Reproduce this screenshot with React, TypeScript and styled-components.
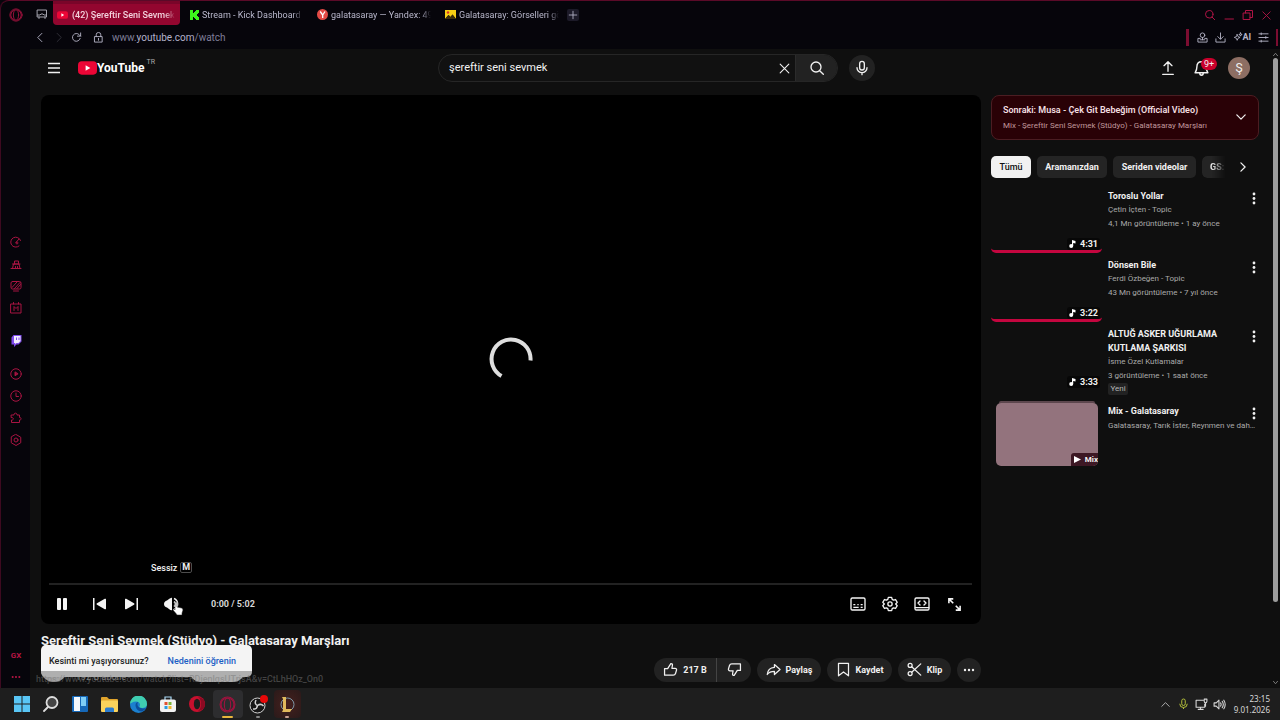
import React from "react";
import styled, { createGlobalStyle, css, keyframes } from "styled-components";

const GlobalStyle = createGlobalStyle`
  * { box-sizing: border-box; }
  html, body { margin: 0; background: #07060c; }
  body { font-family: Roboto, "Liberation Sans", sans-serif; color: #f1f1f1; }
  button, input { font: inherit; color: inherit; }
  button { border: 0; padding: 0; background: none; cursor: pointer; }
  a { color: inherit; text-decoration: none; }
  ul { list-style: none; margin: 0; padding: 0; }
  h1, h2, h3, p { margin: 0; }
  svg { display: block; flex: none; }
`;

/* ---------- icons ---------- */

type IconProps = {
  size?: number;
  width?: number;
  box?: string;
  stroke?: number;
  filled?: boolean;
  children: React.ReactNode;
};

const Icon = ({ size = 16, width, box = "0 0 24 24", stroke = 2, filled, children }: IconProps) => (
  <svg
    width={width ?? size}
    height={size}
    viewBox={box}
    fill={filled ? "currentColor" : "none"}
    stroke={filled ? "none" : "currentColor"}
    strokeWidth={stroke}
    strokeLinecap="round"
    strokeLinejoin="round"
    aria-hidden="true"
  >
    {children}
  </svg>
);

const CloseGlyph = <path d="M4 4l16 16M20 4L4 20" />;
const SearchGlyph = (
  <>
    <circle cx="10.500" cy="10.500" r="7.500" />
    <path d="M16 16l5.500 5.500" />
  </>
);
const MicGlyph = (
  <>
    <rect x="8.500" y="2" width="7" height="13" rx="3.500" />
    <path d="M4.500 11.500a7.500 7.500 0 0 0 15 0M12 19v3" />
  </>
);

/* ---------- window ---------- */

const Desktop = styled.div`
  display: flex;
  flex-direction: column;
  height: 100vh;
  overflow: hidden;
`;

const BrowserWindow = styled.div`
  display: flex;
  flex-direction: column;
  flex: 1;
  min-height: 0;
  border-left: 1px solid #3d0a20;
  border-top-left-radius: 8px;
  background: #06050b;
`;

const TabStrip = styled.div`
  display: flex;
  height: 25px;
  border-top: 1px solid #5a0a28;
  border-top-left-radius: 8px;
  color: #b9b8cc;
  font-size: 9px;
`;

const BrowserMark = styled.button`
  display: grid;
  place-items: center;
  width: 30px;
  height: 28px;
  color: #a3123f;
`;

const WorkspaceButton = styled.button`
  display: grid;
  place-items: center;
  width: 22px;
  height: 26px;
  color: #a3a3ad;
`;

const Tab = styled.a<{ $active?: boolean }>`
  display: flex;
  align-items: center;
  gap: 3px;
  width: 128px;
  height: 24px;
  padding: 3px 5px 0 9px;
  ${(p) =>
    p.$active &&
    css`
      width: 127px;
      gap: 4px;
      padding: 3px 5px 0 4px;
      color: #f3d3dd;
      font-weight: 500;
      background: linear-gradient(#7a0529 0 3px, #93062f 3px);
      border-radius: 0 0 4px 4px;
    `}
`;

const TabTitle = styled.span`
  flex: 1;
  overflow: hidden;
  white-space: nowrap;
  mask-image: linear-gradient(90deg, #000 90%, transparent);
`;

const NewTab = styled.button`
  display: grid;
  place-items: center;
  width: 12px;
  height: 12px;
  margin: 8px 0 0 3px;
  border-radius: 2px;
  background: #1c1a28;
`;

const WindowButtons = styled.div`
  display: flex;
  margin-left: auto;
  padding: 2px 4px 0 0;
  color: #b01445;
`;

const WindowButton = styled.button`
  display: grid;
  place-items: center;
  width: 19px;
  height: 24px;
`;

const AddressBar = styled.div`
  display: flex;
  align-items: center;
  height: 24px;
  padding: 0 2px 0 30px;
  color: #b5b4c6;
`;

const NavButton = styled.button<{ $dim?: boolean }>`
  display: grid;
  place-items: center;
  width: 18px;
  height: 20px;
  opacity: ${(p) => (p.$dim ? 0.25 : 1)};
`;

const LockButton = styled(NavButton)`
  margin-left: 4px;
`;

const Url = styled.p`
  margin-left: 5px;
  color: #7f7e98;
  font-size: 10px;
  strong {
    color: #b2b1ca;
    font-weight: 400;
  }
`;

const Extensions = styled.div`
  display: flex;
  align-items: center;
  justify-content: space-between;
  width: 92px;
  height: 17px;
  margin-left: auto;
  padding: 0 7px 0 8px;
  border: solid #7c0d31;
  border-width: 0 2px 0 3px;
`;

const AiButton = styled.button`
  display: flex;
  align-items: center;
  font-size: 9px;
  font-weight: 700;
`;

const WindowBody = styled.div`
  display: flex;
  flex: 1;
  min-height: 0;
`;

const SideBar = styled.nav`
  display: flex;
  flex-direction: column;
  width: 29px;
  color: #a81442;
`;

const SideGroups = styled.div`
  display: flex;
  flex-direction: column;
  gap: 11px;
  margin: auto 0;
  padding-bottom: 11px;
`;

const SideButton = styled.button<{ $accent?: boolean }>`
  display: grid;
  place-items: center;
  width: 30px;
  height: 22px;
  font-size: 8px;
  font-weight: 700;
  color: ${(p) => (p.$accent ? "#b9a1f5" : "inherit")};
`;

const SideFooter = styled.div`
  color: #b81545;
`;

/* ---------- page ---------- */

const Page = styled.div`
  position: relative;
  flex: 1;
  min-width: 0;
  overflow: hidden;
  background: #0f0f0f;
`;

const Masthead = styled.header`
  display: grid;
  grid-template-columns: 1fr minmax(200px, 437px) 1fr;
  align-items: center;
  height: 38px;
  padding: 0 7px 0 18px;
`;

const Brand = styled.div`
  display: flex;
  align-items: center;
`;

const Logo = styled.a`
  display: flex;
  align-items: center;
  margin-left: 18px;
  font-size: 12px;
  font-weight: 700;
  color: #fff;
`;

const Region = styled.sup`
  align-self: flex-start;
  margin: -3px 0 0 2px;
  color: #aaa;
  font-size: 7px;
  font-weight: 400;
  line-height: 8px;
`;

const SearchRow = styled.div`
  display: flex;
  align-items: center;
  gap: 11px;
`;

const SearchForm = styled.form`
  display: flex;
  flex: 1;
  height: 28px;
  overflow: hidden;
  border: 1px solid #262626;
  border-radius: 14px;
  background: #111;
`;

const SearchInput = styled.input`
  flex: 1;
  min-width: 0;
  padding: 0 10px 1px;
  border: 0;
  outline: 0;
  background: none;
  font-size: 11px;
`;

const ClearButton = styled.button`
  display: grid;
  place-items: center;
  width: 22px;
`;

const SubmitButton = styled.button`
  display: grid;
  place-items: center;
  width: 42px;
  border-left: 1px solid #2b2b2b;
  background: #222;
`;

const VoiceButton = styled.button`
  display: grid;
  place-items: center;
  width: 26px;
  height: 26px;
  border-radius: 50%;
  background: #222;
`;

const Account = styled.div`
  display: flex;
  align-items: center;
  justify-content: flex-end;
  gap: 17px;
  padding-right: 15px;
`;

const AccountButton = styled.button`
  position: relative;
  display: grid;
  place-items: center;
  width: 16px;
  height: 22px;
`;

const Count = styled.span`
  position: absolute;
  left: 8px;
  top: 1px;
  padding: 0 3px;
  border-radius: 6px;
  background: #c9002b;
  font-size: 9px;
  line-height: 12px;
`;

const Avatar = styled.button`
  width: 22px;
  height: 22px;
  margin-left: 2px;
  border-radius: 50%;
  background: #8d6e63;
  font-size: 12px;
  line-height: 22px;
`;

const Columns = styled.div`
  display: flex;
  gap: 10px;
  padding: 8px 13px 0 11px;
`;

const Primary = styled.main`
  flex: 1;
  min-width: 0;
`;

const Player = styled.section`
  position: relative;
  display: flex;
  flex-direction: column;
  justify-content: flex-end;
  aspect-ratio: 16 / 9;
  padding: 0 9px 0 8px;
  border-radius: 8px;
  background: #000;
`;

const spin = keyframes`
  from { transform: rotate(0); }
  to { transform: rotate(360deg); }
`;

const Spinner = styled.div`
  position: absolute;
  inset: 0;
  display: grid;
  place-items: center;
  color: #dedede;
  pointer-events: none;
  svg { animation: ${spin} 2s linear infinite paused; }
`;

const Tooltip = styled.div`
  position: absolute;
  left: 110px;
  bottom: 50px;
  display: flex;
  align-items: center;
  gap: 3px;
  font-size: 9px;
  font-weight: 500;
  line-height: 12px;
`;

const Key = styled.kbd`
  padding: 0 1px;
  border: 1px solid #4d4d4d;
  border-radius: 2px;
  font: 700 9px/9px Roboto, sans-serif;
`;

const Progress = styled.div`
  height: 2px;
  background: #222;
`;

const Controls = styled.div`
  display: flex;
  align-items: center;
  height: 39px;
  padding: 0 2px 0 0;
`;

const ControlGroup = styled.div<{ $before?: number }>`
  display: flex;
  margin-left: ${(p) => p.$before ?? 0}px;
`;

const RightControls = styled.div`
  display: flex;
  margin-left: auto;
`;

const ControlButton = styled.button`
  position: relative;
  display: grid;
  place-items: center;
  width: 32px;
  height: 28px;
  color: #f4f4f4;
`;

const FirstControl = styled(ControlButton)`
  width: 26px;
`;

const Pointer = styled.span`
  position: absolute;
  left: 16px;
  top: 11px;
`;

const Clock = styled.p`
  margin-left: 23px;
  font-size: 9px;
  font-weight: 700;
  color: #d5d5d5;
`;

const Title = styled.h1`
  margin-top: 7px;
  font-size: 13px;
  font-weight: 700;
  line-height: 20px;
  white-space: nowrap;
`;

const MetaRow = styled.div`
  display: flex;
  align-items: center;
  margin-top: 7px;
`;

const ChannelAvatar = styled.a`
  width: 26px;
  height: 24px;
  border-radius: 50%;
  background: #e2e2e2;
`;

const Subscribers = styled.p`
  align-self: flex-end;
  width: 113px;
  margin-left: 9px;
  color: #aaa;
  font-size: 9px;
  line-height: 10px;
`;

const Subscribe = styled.button`
  width: 56px;
  height: 24px;
  border-radius: 12px;
  background: #f1f1f1;
`;

const Actions = styled.div`
  display: flex;
  gap: 6px;
  margin-left: auto;
  font-size: 9px;
  font-weight: 700;
`;

const Pill = styled.button<{ $width: number }>`
  display: flex;
  align-items: center;
  justify-content: center;
  gap: 5px;
  width: ${(p) => p.$width}px;
  height: 24px;
  border-radius: 12px;
  background: #222;
`;

const SplitPill = styled.div`
  display: flex;
  overflow: hidden;
  border-radius: 12px;
`;

const LikeButton = styled(Pill)`
  border-radius: 0;
`;

const DislikeButton = styled(Pill)`
  border-radius: 0;
  border-left: 1px solid #444;
`;

const Toast = styled.div`
  position: absolute;
  left: 11px;
  bottom: 11px;
  display: flex;
  align-items: center;
  gap: 19px;
  height: 32px;
  padding: 0 16px 1px 8px;
  border-radius: 5px;
  background: #f4f4f4;
  color: #222;
  font-size: 9px;
  font-weight: 500;
  white-space: nowrap;
`;

const ToastLink = styled.a`
  color: #1c5fc4;
`;

const StatusUrl = styled.div`
  position: absolute;
  left: 0;
  bottom: 0;
  height: 17px;
  padding: 0 5px 0 6px;
  background: rgba(15, 15, 15, 0.3);
  color: rgba(120, 120, 120, 0.5);
  font-size: 9px;
  font-weight: 500;
  line-height: 16px;
  white-space: nowrap;
`;

/* ---------- related column ---------- */

const Secondary = styled.aside`
  width: 268px;
`;

const QueueCard = styled.button`
  display: flex;
  align-items: center;
  justify-content: space-between;
  width: 100%;
  height: 45px;
  padding: 0 12px 1px 11px;
  border: 1px solid #4b1d22;
  border-radius: 8px;
  background: #290106;
  text-align: left;
`;

const QueueTitle = styled.p`
  color: #f3dfe0;
  font-size: 9px;
  font-weight: 600;
  line-height: 16px;
`;

const QueueSource = styled.p`
  color: #c0989c;
  font-size: 8px;
  line-height: 15px;
`;

const Chips = styled.div`
  display: flex;
  align-items: center;
  gap: 6px;
  margin: 16px 0 11px;
`;

const Chip = styled.button<{ $width: number; $selected?: boolean }>`
  width: ${(p) => p.$width}px;
  height: 22px;
  border-radius: 5px;
  background: ${(p) => (p.$selected ? "#f1f1f1" : "#242424")};
  color: ${(p) => (p.$selected ? "#0f0f0f" : "#f1f1f1")};
  font-size: 9px;
  font-weight: ${(p) => (p.$selected ? 500 : 700)};
  line-height: 22px;
  white-space: nowrap;
`;

const CutChip = styled(Chip)`
  padding-left: 8px;
  overflow: hidden;
  border-radius: 5px 0 0 5px;
  text-align: left;
  mask-image: linear-gradient(90deg, #000 40%, transparent);
`;

const ChipsNext = styled.button`
  margin-left: 6px;
`;

const VideoList = styled.ul`
  display: flex;
  flex-direction: column;
  gap: 5px;
`;

const VideoItem = styled.li`
  display: flex;
  gap: 6px;
`;

const Thumb = styled.a<{ $watched?: boolean }>`
  display: flex;
  align-items: flex-end;
  justify-content: flex-end;
  width: 111px;
  height: 64px;
  padding: 0 2px 0 0;
  border-bottom: 3px solid transparent;
  border-radius: 5px;
  ${(p) => p.$watched && css`border-bottom-color: #c4063f;`}
`;

const Duration = styled.span`
  display: flex;
  align-items: center;
  gap: 4px;
  padding: 0 2px;
  border-radius: 3px;
  background: #070707;
  font-size: 9px;
  font-weight: 700;
  line-height: 12px;
`;

const MixThumb = styled.a`
  display: flex;
  flex-direction: column;
  width: 102px;
  height: 65px;
  margin: -3px 4px 0 5px;
  &::before {
    content: "";
    height: 2px;
    margin: 0 3px;
    border-radius: 4px 4px 0 0;
    background: #5d474e;
  }
`;

const MixCover = styled.span`
  display: flex;
  flex: 1;
  align-items: flex-end;
  justify-content: flex-end;
  overflow: hidden;
  border-radius: 5px;
  background: #93737d;
`;

const MixBadge = styled.span`
  display: flex;
  align-items: center;
  gap: 4px;
  height: 13px;
  padding-left: 3px;
  border-radius: 3px 0 0 0;
  background: #3d1824;
  font-size: 8px;
  font-weight: 700;
`;

const VideoText = styled.div`
  flex: 1;
  min-width: 0;
  color: #aaa;
  font-size: 8px;
  line-height: 14px;
`;

const VideoTitle = styled.h3`
  color: #f1f1f1;
  font-size: 9px;
  font-weight: 700;
  line-height: 14px;
`;

const Ellipsed = styled.p`
  overflow: hidden;
  text-overflow: ellipsis;
  white-space: nowrap;
`;

const NewBadge = styled.span`
  display: block;
  width: 20px;
  margin-bottom: 4px;
  border-radius: 2px;
  background: #222;
  color: #b5b5b5;
  text-align: center;
  line-height: 12px;
`;

const MoreButton = styled.button`
  align-self: flex-start;
  width: 10px;
  height: 18px;
`;

const VideoTop = styled.div`
  display: flex;
  justify-content: space-between;
  height: 15px;
`;

const ScrollTrack = styled.div`
  display: flex;
  flex-direction: column;
  align-items: center;
  width: 8px;
  padding: 3px 2px 3px 0;
  color: #8c8c8c;
  background: #0f0f0f;
`;

const ScrollThumb = styled.div`
  width: 5px;
  height: 86%;
  margin: 1px 0 auto;
  border-radius: 3px;
  background: #9d9d9d;
`;

/* ---------- taskbar ---------- */

const Taskbar = styled.footer`
  display: flex;
  align-items: center;
  height: 32px;
  padding: 0 10px 0 7px;
  background: #1e1e1e;
`;

const TaskApps = styled.div`
  display: grid;
  grid-template-columns: repeat(10, 1fr);
  width: 295px;
`;

const TaskApp = styled.button<{ $glow?: string; $mark?: string; $markWidth?: number }>`
  position: relative;
  display: grid;
  place-items: center;
  height: 28px;
  margin: 0 1px;
  border-radius: 4px;
  background: ${(p) => p.$glow ?? "none"};
  &::after {
    content: "";
    position: absolute;
    bottom: 0;
    width: ${(p) => p.$markWidth ?? 4}px;
    height: 2px;
    border-radius: 1px;
    background: ${(p) => p.$mark ?? "transparent"};
  }
`;

const Tray = styled.div`
  display: flex;
  align-items: center;
  margin-left: auto;
  color: #d8d8d8;
`;

const TrayButton = styled.button`
  display: grid;
  place-items: center;
  width: 18px;
  height: 24px;
`;

const DateTime = styled.p`
  min-width: 42px;
  font: 8px/11px "Noto Sans", sans-serif;
  text-align: right;
`;

/* ---------- data ---------- */

type Video = {
  title: string;
  channel: string;
  stats: string;
  length: string;
  watched?: boolean;
  fresh?: boolean;
};

const videos: Video[] = [
  { title: "Toroslu Yollar", channel: "Çetin İçten - Topic", stats: "4,1 Mn görüntüleme • 1 ay önce", length: "4:31", watched: true },
  { title: "Dönsen Bile", channel: "Ferdi Özbeğen - Topic", stats: "43 Mn görüntüleme • 7 yıl önce", length: "3:22", watched: true },
  { title: "ALTUĞ ASKER UĞURLAMA KUTLAMA ŞARKISI", channel: "İsme Özel Kutlamalar", stats: "3 görüntüleme • 1 saat önce", length: "3:33", fresh: true },
];

const sideTools: { name: string; glyph: React.ReactNode }[][] = [
  [
    { name: "GX Control", glyph: <path d="M21 9a10 10 0 1 0-3 11M12 13l6-7M12 13a2 2 0 1 0 1-1" /> },
    { name: "GX Cleaner", glyph: <path d="M2 21h20M5 21l2-9h11l2 9M5 12h15M9 12V6h8v6M11 17v4M15 17v4" /> },
    { name: "Wallpapers", glyph: <><rect x="2" y="3" width="20" height="15" rx="3" /><path d="M4 15L14 4M9 17L20 5M14 17l7-8M7 22h10" /></> },
    { name: "Mods", glyph: <><path d="M2 4h20v18H2zM7 1v3M17 1v3" /><path d="M8 17V9l4 4 4-4v8" /></> },
  ],
  [{ name: "Twitch", glyph: null }],
  [
    { name: "Player", glyph: <><circle cx="12" cy="12" r="10.500" /><path d="M10 8.500v7l5.500-3.500z" fill="currentColor" /></> },
    { name: "History", glyph: <><circle cx="12" cy="12" r="10.500" /><path d="M12 6v7h5" /></> },
    { name: "Extensions", glyph: <path d="M3 6h5c-1-5 7-5 6 0h5v5c4-1 4 6 0 5v5H3v-5c5 1 5-6 0-5z" /> },
    { name: "Settings", glyph: <><path d="M12 1l9.500 5.500v11L12 23l-9.500-5.500v-11z" /><circle cx="12" cy="12" r="4" /></> },
  ],
];

const DotsGlyph = (
  <svg width="10" height="16" viewBox="0 0 10 16" fill="#f1f1f1" aria-hidden="true">
    <circle cx="5" cy="4" r="1.400" />
    <circle cx="5" cy="8.500" r="1.400" />
    <circle cx="5" cy="13" r="1.400" />
  </svg>
);

const PlayBadge = ({ width, height }: { width: number; height: number }) => (
  <svg width={width} height={height} viewBox="0 0 20 14" aria-hidden="true">
    <rect width="20" height="14" rx="4" fill="#ec0636" />
    <path d="M8 4v6l5-3z" fill="#fff" />
  </svg>
);

const OperaRing = ({ size }: { size: number }) => (
  <Icon size={size} stroke={1.5}>
    <circle cx="12" cy="12" r="10.500" />
    <ellipse cx="12" cy="12" rx="4.500" ry="9" />
    <path d="M9 3.500a9 9 0 0 0 0 17M15 3.500a9 9 0 0 1 0 17" />
  </Icon>
);

/* ---------- sections ---------- */

const Chrome = () => (
  <>
    <TabStrip>
      <BrowserMark aria-label="Opera GX"><OperaRing size={14} /></BrowserMark>
      <WorkspaceButton aria-label="Workspace">
        <Icon size={12}>
          <path d="M3 4h18v14H3zM3 14h5l2-2h4l2 2h5M6 18v3M18 18v3" />
        </Icon>
      </WorkspaceButton>
      <Tab href="#video" $active>
        <PlayBadge width={11} height={8} />
        <TabTitle>(42) Şereftir Seni Sevmek</TabTitle>
      </Tab>
      <Tab href="#kick">
        <svg width="10" height="10" viewBox="0 0 10 10" aria-hidden="true">
          <path d="M1 0h3v3h1V2h1V1h1V0h3v3H9v1H8v2h1v1h1v3H7V9H6V8H5V7H4v3H1z" fill="#3df71c" />
        </svg>
        <TabTitle>Stream - Kick Dashboard</TabTitle>
      </Tab>
      <Tab href="#yandex">
        <svg width="11" height="11" viewBox="0 0 11 11" aria-hidden="true">
          <circle cx="5.500" cy="5.500" r="5.500" fill="#e24a45" />
          <path d="M3.200 2.500l2.500 3.500v3M8 2.500L5.700 6" stroke="#fff" strokeWidth="1.300" fill="none" />
        </svg>
        <TabTitle>galatasaray — Yandex: 49</TabTitle>
      </Tab>
      <Tab href="#images">
        <svg width="11" height="9" viewBox="0 0 11 9" aria-hidden="true">
          <path d="M0 0h11v9L7.500 4.500 5.500 7 3.500 5 0 9z" fill="#f8cf14" />
          <circle cx="3" cy="2.500" r="1.200" fill="#d6342c" />
          <path d="M0 9l3.500-4 2 2 2-2.500L11 9z" fill="#3b2d0a" />
        </svg>
        <TabTitle>Galatasaray: Görselleri gör</TabTitle>
      </Tab>
      <NewTab aria-label="New tab"><Icon size={10}><path d="M12 3v18M3 12h18" /></Icon></NewTab>
      <WindowButtons>
        <WindowButton aria-label="Search tabs"><Icon size={12}>{SearchGlyph}</Icon></WindowButton>
        <WindowButton aria-label="Minimize"><Icon size={12}><path d="M4 20h17" /></Icon></WindowButton>
        <WindowButton aria-label="Restore"><Icon size={12}><path d="M3 8h13v13H3zM7 8V3h14v14h-5" /></Icon></WindowButton>
        <WindowButton aria-label="Close"><Icon size={11}>{CloseGlyph}</Icon></WindowButton>
      </WindowButtons>
    </TabStrip>
    <AddressBar>
      <NavButton aria-label="Back"><Icon size={11}><path d="M15 3l-9 9 9 9" /></Icon></NavButton>
      <NavButton aria-label="Forward" $dim><Icon size={11}><path d="M9 3l9 9-9 9" /></Icon></NavButton>
      <NavButton aria-label="Reload"><Icon size={11}><path d="M20 14a8.500 8.500 0 1 1-2-8l3 3M21 2v7h-7" /></Icon></NavButton>
      <LockButton aria-label="Site information">
        <Icon size={11}><path d="M4 10h16v12H4zM7 10V6a5 5 0 0 1 10 0v4M12 14v4" /></Icon>
      </LockButton>
      <Url>www.<strong>youtube.com</strong>/watch</Url>
      <Extensions>
        <button aria-label="Profile">
          <Icon size={11}><circle cx="12" cy="7" r="5" /><path d="M7 14H2v8h20v-8h-5M7 17h10M12 12v5" /></Icon>
        </button>
        <button aria-label="Downloads">
          <Icon size={11}><path d="M12 2v13M6 10l6 6 6-6M2 15v7h20v-7" /></Icon>
        </button>
        <AiButton aria-label="Aria AI">
          <Icon size={10}><path d="M10 6l2 5 5 2-5 2-2 5-2-5-5-2 5-2zM18 2l1 3 3 1-3 1-1 3-1-3-3-1 3-1z" /></Icon>
          AI
        </AiButton>
        <button aria-label="Easy setup">
          <Icon size={11}><path d="M2 4h20M2 12h20M2 20h20" /><path d="M7 2v4M17 10v4M7 18v4" /></Icon>
        </button>
      </Extensions>
    </AddressBar>
  </>
);

const Tools = () => (
  <SideBar aria-label="Sidebar">
    <SideGroups>
      {sideTools.map((group, i) => (
        <div key={i}>
          {group.map((tool) =>
            tool.glyph ? (
              <SideButton key={tool.name} aria-label={tool.name}>
                <Icon size={12}>{tool.glyph}</Icon>
              </SideButton>
            ) : (
              <SideButton key={tool.name} aria-label={tool.name} $accent>
                <svg width="11" height="12" viewBox="0 0 22 24" aria-hidden="true">
                  <path d="M5 0L1 5v14h5v5l5-5h4l6-6V0z" fill="#7e4bea" />
                  <path d="M6 2h13v10l-4 4h-4l-3 2v-2H6z" fill="#f2ecff" />
                  <path d="M11 5v5M16 5v5" stroke="#7e4bea" strokeWidth="2" />
                </svg>
              </SideButton>
            )
          )}
        </div>
      ))}
    </SideGroups>
    <SideFooter>
      <SideButton>GX</SideButton>
      <SideButton aria-label="More">
        <Icon size={10} filled><circle cx="4" cy="12" r="2.500" /><circle cx="12" cy="12" r="2.500" /><circle cx="20" cy="12" r="2.500" /></Icon>
      </SideButton>
    </SideFooter>
  </SideBar>
);

const Header = () => (
  <Masthead>
    <Brand>
      <button aria-label="Menu">
        <svg width="12" height="12" viewBox="0 0 12 12" stroke="#f1f1f1" strokeWidth="1.500" aria-hidden="true">
          <path d="M0 1.500h12M0 6h12M0 10.500h12" />
        </svg>
      </button>
      <Logo href="#home">
        <PlayBadge width={19} height={14} />
        <span>YouTube</span>
        <Region>TR</Region>
      </Logo>
    </Brand>
    <SearchRow>
      <SearchForm onSubmit={(e) => e.preventDefault()}>
        <SearchInput aria-label="Ara" defaultValue="şereftir seni sevmek" />
        <ClearButton type="button" aria-label="Temizle"><Icon size={13}>{CloseGlyph}</Icon></ClearButton>
        <SubmitButton aria-label="Ara"><Icon size={16}>{SearchGlyph}</Icon></SubmitButton>
      </SearchForm>
      <VoiceButton aria-label="Sesli arama"><Icon size={16}>{MicGlyph}</Icon></VoiceButton>
    </SearchRow>
    <Account>
      <AccountButton aria-label="Oluştur">
        <Icon size={16}><path d="M12 17V3M6 8.500L12 2.500l6 6M4 21.500h16" /></Icon>
      </AccountButton>
      <AccountButton aria-label="Bildirimler">
        <Icon size={17}><path d="M12 2.500c-4 0-6.500 3-6.500 7 0 4-1 5.500-2.500 8.500h18c-1.500-3-2.500-4.500-2.500-8.500 0-4-2.500-7-6.500-7zM9.500 18.500c0 4 5 4 5 0" /></Icon>
        <Count>9+</Count>
      </AccountButton>
      <Avatar>Ş</Avatar>
    </Account>
  </Masthead>
);

const VideoPlayer = () => (
  <Player>
    <Spinner role="status" aria-label="Yükleniyor">
      <svg width="44" height="44" viewBox="0 0 44 44" fill="none" stroke="currentColor" strokeWidth="4">
        <path d="M41.500 23.500A19.500 19.500 0 1 0 12.500 39" />
      </svg>
    </Spinner>
    <Tooltip role="tooltip">Sessiz <Key>M</Key></Tooltip>
    <Progress />
    <Controls>
      <FirstControl aria-label="Duraklat">
        <svg width="10" height="12" viewBox="0 0 10 12" fill="currentColor" aria-hidden="true">
          <rect width="4" height="12" rx="1" /><rect x="6" width="4" height="12" rx="1" />
        </svg>
      </FirstControl>
      <ControlGroup $before={8}>
        <ControlButton aria-label="Önceki">
          <svg width="13" height="12" viewBox="0 0 13 12" fill="currentColor" aria-hidden="true">
            <rect width="1.500" height="12" /><path d="M13 1.500v9a.8.8 0 0 1-1.200.7L4 6.700a.8.8 0 0 1 0-1.400L11.800.8A.8.8 0 0 1 13 1.500z" />
          </svg>
        </ControlButton>
        <ControlButton aria-label="Sonraki">
          <svg width="13" height="12" viewBox="0 0 13 12" fill="currentColor" aria-hidden="true">
            <rect x="11.500" width="1.500" height="12" /><path d="M0 1.500v9a.8.8 0 0 0 1.200.7L9 6.700a.8.8 0 0 0 0-1.400L1.200.8A.8.8 0 0 0 0 1.500z" />
          </svg>
        </ControlButton>
      </ControlGroup>
      <ControlGroup $before={9}>
        <ControlButton aria-label="Sessiz">
          <svg width="16" height="14" viewBox="0 0 16 14" aria-hidden="true">
            <path d="M8 .8v12.400Q6.500 13.600 3 10.500 0 9.500 0 7t3-3.500Q6.500.4 8 .8z" fill="currentColor" />
            <path d="M10 1.500a6 6 0 0 1 0 11M10 4.500a3 3 0 0 1 0 5" fill="none" stroke="currentColor" strokeWidth="1.500" />
          </svg>
          <Pointer>
            <svg width="12" height="15" viewBox="0 0 12 15" aria-hidden="true">
              <path d="M3 9V2q0-1.500 1-1.500T5 2v4l4.500 1q1.500.5 1.500 2l-1 3v2H5l-1-1.500L1 9q-.5-1.500 1-1z" fill="#fff" stroke="#222" strokeWidth="0.500" />
            </svg>
          </Pointer>
        </ControlButton>
      </ControlGroup>
      <Clock>0:00 / 5:02</Clock>
      <RightControls>
        <ControlButton aria-label="Altyazılar">
          <Icon size={16}><rect x="1.500" y="3" width="21" height="18" rx="2" /><path d="M5 13h3M11 13h2M16 13h3M5 17h8M16 17h3" strokeLinecap="butt" /></Icon>
        </ControlButton>
        <ControlButton aria-label="Ayarlar">
          <Icon size={16}>
            <path d="M9.500 2h5l.8 3 2 1.200 3-.9 2.500 4.300L20.500 12l2.300 2.400-2.500 4.300-3-.9-2 1.200-.8 3h-5l-.8-3-2-1.200-3 .9-2.500-4.300L3.500 12 1.200 9.600l2.500-4.300 3 .9 2-1.200z" />
            <circle cx="12" cy="12" r="3.200" />
          </Icon>
        </ControlButton>
        <ControlButton aria-label="Sinema modu">
          <Icon size={16}><rect x="1.500" y="3" width="21" height="18" rx="2" /><path d="M9 7.500L6 10.500l3 3M15 7.500l3 3-3 3M2 17.500h20" /></Icon>
        </ControlButton>
        <ControlButton aria-label="Tam ekran">
          <Icon size={15}><path d="M3 10V3h7M3 3l7 7M21 14v7h-7M21 21l-7-7" strokeWidth="2.500" strokeLinecap="butt" strokeLinejoin="miter" /></Icon>
        </ControlButton>
      </RightControls>
    </Controls>
  </Player>
);

const thumbPath = "M2.500 10.500H7.500L12.500 2.500c2-.2 3 1 2.600 3l-.9 4.500h5c2 0 3 1.400 2.400 3.300l-1.600 5c-.6 1.900-1.700 2.700-3.600 2.700H2.500z";

const Related = () => (
  <Secondary>
    <QueueCard>
      <span>
        <QueueTitle>Sonraki: Musa - Çek Git Bebeğim (Official Video)</QueueTitle>
        <QueueSource>Mix - Şereftir Seni Sevmek (Stüdyo) - Galatasaray Marşları</QueueSource>
      </span>
      <Icon size={10} stroke={3}><path d="M2 7l10 10L22 7" /></Icon>
    </QueueCard>
    <Chips>
      <Chip $width={40} $selected>Tümü</Chip>
      <Chip $width={70}>Aramanızdan</Chip>
      <Chip $width={83}>Seriden videolar</Chip>
      <CutChip $width={24}>GS:</CutChip>
      <ChipsNext aria-label="İleri"><Icon size={10} stroke={3}><path d="M7 2l10 10L7 22" /></Icon></ChipsNext>
    </Chips>
    <VideoList>
      {videos.map((v) => (
        <VideoItem key={v.title}>
          <Thumb href="#watch" $watched={v.watched}>
            <Duration>
              <svg width="7" height="8" viewBox="0 0 7 8" fill="#fff" aria-hidden="true">
                <circle cx="2.200" cy="6" r="2" /><path d="M3 0l3.500 1v2.500L4.200 3v3H3z" />
              </svg>
              {v.length}
            </Duration>
          </Thumb>
          <VideoText>
            <VideoTitle>{v.title}</VideoTitle>
            <p>{v.channel}</p>
            <p>{v.stats}</p>
            {v.fresh && <NewBadge>Yeni</NewBadge>}
          </VideoText>
          <MoreButton aria-label="İşlem menüsü">{DotsGlyph}</MoreButton>
        </VideoItem>
      ))}
      <VideoItem>
        <MixThumb href="#mix">
          <MixCover>
            <MixBadge>
              <svg width="7" height="7" viewBox="0 0 7 7" fill="#fff" aria-hidden="true"><path d="M0 0v7l7-3.500z" /></svg>
              Mix
            </MixBadge>
          </MixCover>
        </MixThumb>
        <VideoText>
          <VideoTop>
            <VideoTitle>Mix - Galatasaray</VideoTitle>
            <MoreButton aria-label="İşlem menüsü">{DotsGlyph}</MoreButton>
          </VideoTop>
          <Ellipsed>Galatasaray, Tarık İster, Reynmen ve daha fazlası</Ellipsed>
        </VideoText>
      </VideoItem>
    </VideoList>
  </Secondary>
);

const TaskbarRow = () => (
  <Taskbar>
    <TaskApps>
      <TaskApp aria-label="Başlat">
        <svg width="16" height="16" viewBox="0 0 16 16" fill="#59c6f5" aria-hidden="true">
          <path d="M0 0h7.500v7.500H0zM8.500 0H16v7.500H8.500zM0 8.500h7.500V16H0zM8.500 8.500H16V16H8.500z" />
        </svg>
      </TaskApp>
      <TaskApp aria-label="Ara">
        <svg width="16" height="16" viewBox="0 0 16 16" fill="#444" stroke="#ddd" strokeWidth="1.800" aria-hidden="true">
          <circle cx="9" cy="6.500" r="5.500" /><path d="M5 11l-4 4" strokeLinecap="round" />
        </svg>
      </TaskApp>
      <TaskApp aria-label="Pencere öğeleri">
        <svg width="16" height="16" viewBox="0 0 16 16" aria-hidden="true">
          <rect width="16" height="16" rx="1" fill="#1668b8" /><rect x="2" y="1" width="6" height="14" fill="#f4f8fc" /><rect x="9" y="1" width="5" height="9" fill="#7fcdf5" />
        </svg>
      </TaskApp>
      <TaskApp aria-label="Dosya Gezgini">
        <svg width="17" height="15" viewBox="0 0 17 15" aria-hidden="true">
          <path d="M0 1q0-1 1-1h5l2 2h8q1 0 1 1v3H0z" fill="#e0a42c" /><rect y="3.500" width="17" height="11.500" rx="1" fill="#fbd35c" /><path d="M4 15v-3q0-1.500 1.500-1.500h6Q13 10.500 13 12v3z" fill="#2b7cd0" />
        </svg>
      </TaskApp>
      <TaskApp aria-label="Edge">
        <svg width="17" height="17" viewBox="0 0 17 17" aria-hidden="true">
          <circle cx="8.500" cy="8.500" r="8.500" fill="#1b80cf" />
          <path d="M0 8A8.500 8.500 0 0 1 17 8c0 3-2.500 4-5 4-2 0-3-.8-2.500-1.600C11 8 9 5.500 6 5.500 3 5.500.8 7 0 8z" fill="#3fcdb0" />
          <path d="M5.500 9c0-2 1.500-3 3-3-2 1.500-1 5 2 6 2 .7 4 .5 5.500-.3-1 2-3 3.500-4.500 3.800C8 15.500 5.500 12 5.500 9z" fill="#0d4f9c" />
        </svg>
      </TaskApp>
      <TaskApp aria-label="Microsoft Store">
        <svg width="16" height="16" viewBox="0 0 16 16" aria-hidden="true">
          <path d="M5 4V1h6v3" fill="none" stroke="#a9d8f4" strokeWidth="1.200" /><rect y="3.500" width="16" height="12.500" rx="2" fill="#f2f2f2" />
          <path d="M4.500 6h3v3h-3z" fill="#e2502f" /><path d="M8.500 6h3v3h-3z" fill="#7cb43b" /><path d="M4.500 10h3v3h-3z" fill="#2b9be0" /><path d="M8.500 10h3v3h-3z" fill="#f0b52e" />
        </svg>
      </TaskApp>
      <TaskApp aria-label="Opera">
        <svg width="16" height="16" viewBox="0 0 16 16" aria-hidden="true">
          <circle cx="8" cy="8" r="8" fill="#c8102e" /><ellipse cx="8" cy="8" rx="3.200" ry="5.300" fill="#1e1e1e" /><path d="M9 1q7 1 7 7t-7 7q3-2 3-7T9 1z" fill="#8c0a22" />
        </svg>
      </TaskApp>
      <TaskApp aria-label="Opera GX" $glow="#2d2d2f" $mark="#e8b63c" $markWidth={11}>
        <BrowserMark as="span"><OperaRing size={17} /></BrowserMark>
      </TaskApp>
      <TaskApp aria-label="OBS" $mark="#888">
        <svg width="19" height="19" viewBox="0 0 19 19" fill="none" stroke="#d2d2d2" aria-hidden="true">
          <circle cx="8.500" cy="10.500" r="7.500" fill="#171717" />
          <path d="M7 5q-2 4 1.500 5.500Q12 8 14.500 11M8.500 10.500Q8 14.500 4 14" strokeWidth="1.500" />
          <circle cx="15" cy="4" r="4" fill="#e80808" stroke="none" />
        </svg>
      </TaskApp>
      <TaskApp aria-label="League of Legends" $glow="radial-gradient(#45201d, #2a1a1a)" $mark="#c9a091">
        <svg width="16" height="17" viewBox="0 0 16 17" fill="none" aria-hidden="true">
          <circle cx="8.500" cy="8.500" r="6.500" stroke="#7d97a6" /><path d="M3 1h4v12h6l-2 3H3l1-2V3z" fill="#e0b95c" />
        </svg>
      </TaskApp>
    </TaskApps>
    <Tray>
      <TrayButton aria-label="Gizli simgeler"><Icon size={9}><path d="M2 17L12 7l10 10" /></Icon></TrayButton>
      <TrayButton aria-label="Mikrofon"><svg width="9" height="12" viewBox="3 1 18 22" fill="none" stroke="#b4bf3b" strokeWidth="2" aria-hidden="true">{MicGlyph}</svg></TrayButton>
      <TrayButton aria-label="Ağ"><Icon size={13}><path d="M15 4H2v13h16v-6M6 21h9M10 17v4M17 2v4q0 3 2.500 3T22 6V2zM19.500 9v6" /></Icon></TrayButton>
      <TrayButton aria-label="Ses"><Icon size={13}><path d="M2 9h4l5-5v16l-5-5H2zM14 9q2 3 0 6M17 6q4 6 0 12M20 4q5 8 0 16" /></Icon></TrayButton>
      <DateTime>23:15<br />9.01.2026</DateTime>
    </Tray>
  </Taskbar>
);

export default function App() {
  return (
    <Desktop>
      <GlobalStyle />
      <BrowserWindow>
        <Chrome />
        <WindowBody>
          <Tools />
          <Page>
            <Header />
            <Columns>
              <Primary>
                <VideoPlayer />
                <Title>Şereftir Seni Sevmek (Stüdyo) - Galatasaray Marşları</Title>
                <MetaRow>
                  <ChannelAvatar href="#channel" aria-label="Kanal" />
                  <Subscribers>192 B abone</Subscribers>
                  <Subscribe aria-label="Abone ol" />
                  <Actions>
                    <SplitPill>
                      <LikeButton $width={62}><Icon size={15}><path d={thumbPath} /></Icon>217 B</LikeButton>
                      <DislikeButton $width={35} aria-label="Beğenmedim">
                        <Icon size={15}><g transform="rotate(180 12 12)"><path d={thumbPath} /></g></Icon>
                      </DislikeButton>
                    </SplitPill>
                    <Pill $width={64}>
                      <Icon size={15}><path d="M13.500 4l9 8-9 8v-5c-6 0-9 1.500-11.500 5 .5-6 4-11 11.500-11.500z" /></Icon>Paylaş
                    </Pill>
                    <Pill $width={65}>
                      <Icon size={15}><path d="M4 2h16v20l-8-6-8 6z" /></Icon>Kaydet
                    </Pill>
                    <Pill $width={53}>
                      <Icon size={15}><circle cx="5" cy="5.500" r="3.200" /><circle cx="5" cy="18.500" r="3.200" /><path d="M7.500 16.500L22 3M7.500 7.500L22 21" /></Icon>Klip
                    </Pill>
                    <Pill $width={24} aria-label="Diğer işlemler">
                      <Icon size={12} filled><circle cx="4" cy="12" r="2.400" /><circle cx="12" cy="12" r="2.400" /><circle cx="20" cy="12" r="2.400" /></Icon>
                    </Pill>
                  </Actions>
                </MetaRow>
              </Primary>
              <Related />
            </Columns>
            <Toast role="status">
              <span>Kesinti mi yaşıyorsunuz?</span>
              <ToastLink href="#help">Nedenini öğrenin</ToastLink>
            </Toast>
            <StatusUrl>https://www.youtube.com/watch?list=RDjenlqsUTrjsA&amp;v=CtLhHOz_On0</StatusUrl>
          </Page>
          <ScrollTrack>
            <Icon size={5} stroke={4}><path d="M2 18L12 6l10 12" /></Icon>
            <ScrollThumb />
            <Icon size={5} stroke={4}><path d="M2 6l10 12L22 6" /></Icon>
          </ScrollTrack>
        </WindowBody>
      </BrowserWindow>
      <TaskbarRow />
    </Desktop>
  );
}
